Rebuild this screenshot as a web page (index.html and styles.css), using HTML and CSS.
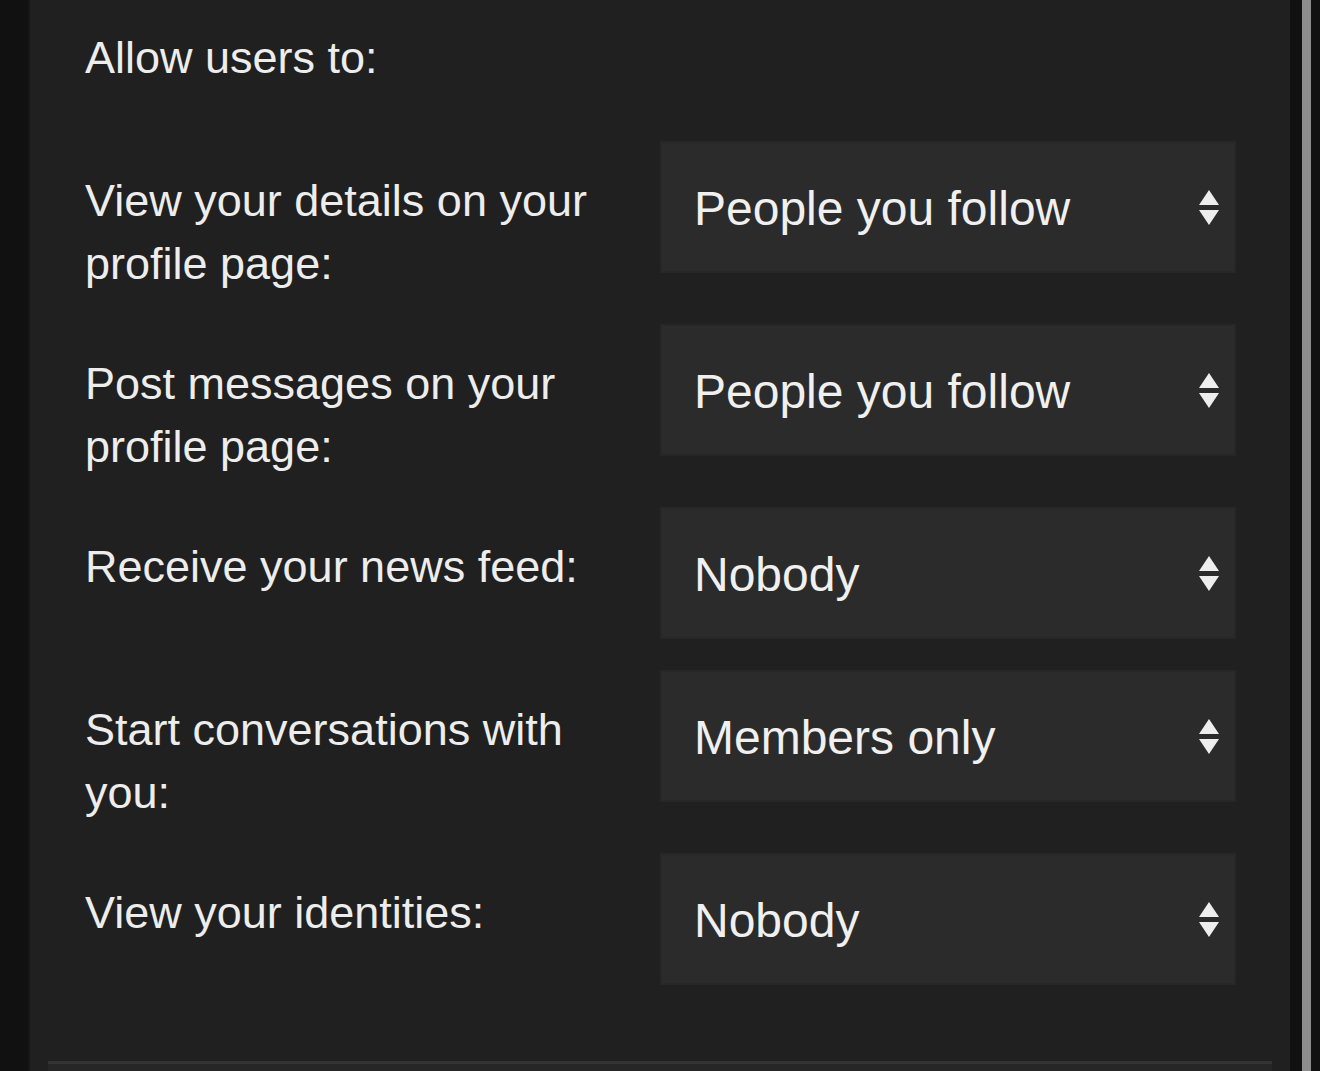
FILE: index.html
```html
<!DOCTYPE html>
<html>
<head>
<meta charset="utf-8">
<link rel="stylesheet" href="styles.css">
</head>
<body>
<div class="page">
  <div class="gutter-left"></div>
  <div class="panel">
    <div class="content">
      <div class="heading">Allow users to:</div>
      <div class="rows">
        <div class="row">
          <div class="label">View your details on your profile page:</div>
          <div class="select"><span class="value">People you follow</span>
            <svg class="arrows" width="20" height="35" viewBox="0 0 20 35"><polygon points="10,0 20,15 0,15" fill="#eeeeee"/><polygon points="0,20 20,20 10,35" fill="#eeeeee"/></svg></div>
        </div>
        <div class="row">
          <div class="label">Post messages on your profile page:</div>
          <div class="select"><span class="value">People you follow</span>
            <svg class="arrows" width="20" height="35" viewBox="0 0 20 35"><polygon points="10,0 20,15 0,15" fill="#eeeeee"/><polygon points="0,20 20,20 10,35" fill="#eeeeee"/></svg></div>
        </div>
        <div class="row">
          <div class="label">Receive your news feed:</div>
          <div class="select"><span class="value">Nobody</span>
            <svg class="arrows" width="20" height="35" viewBox="0 0 20 35"><polygon points="10,0 20,15 0,15" fill="#eeeeee"/><polygon points="0,20 20,20 10,35" fill="#eeeeee"/></svg></div>
        </div>
        <div class="row">
          <div class="label">Start conversations with you:</div>
          <div class="select"><span class="value">Members only</span>
            <svg class="arrows" width="20" height="35" viewBox="0 0 20 35"><polygon points="10,0 20,15 0,15" fill="#eeeeee"/><polygon points="0,20 20,20 10,35" fill="#eeeeee"/></svg></div>
        </div>
        <div class="row">
          <div class="label">View your identities:</div>
          <div class="select"><span class="value">Nobody</span>
            <svg class="arrows" width="20" height="35" viewBox="0 0 20 35"><polygon points="10,0 20,15 0,15" fill="#eeeeee"/><polygon points="0,20 20,20 10,35" fill="#eeeeee"/></svg></div>
        </div>
      </div>
    </div>
    <div class="divider"></div>
  </div>
  <div class="gutter-right"></div>
  <div class="scrollbar"></div>
  <div class="edge-right"></div>
</div>
</body>
</html>
```

FILE: styles.css
```css
html, body {
  margin: 0;
  padding: 0;
  background: #111111;
  overflow: hidden;
}
.page {
  display: flex;
  width: 1320px;
  height: 1071px;
  font-family: "Liberation Sans", Arial, sans-serif;
}
.gutter-left {
  flex: 0 0 28px;
  background: #111111;
  border-right: 2px solid #171717;
}
.panel {
  flex: 0 0 1260px;
  background: #202020;
  display: flex;
  flex-direction: column;
}
.content {
  padding: 26px 54px 0 55px;
  flex: 1;
}
.heading {
  font-size: 45px;
  line-height: 63px;
  color: #ededed;
  margin-bottom: 52px;
}
.rows {
  display: flex;
  flex-direction: column;
  gap: 31px;
}
.row {
  display: flex;
  align-items: flex-start;
}
.label {
  flex: 0 0 520px;
  margin-right: 55px;
  padding-top: 28px;
  margin-bottom: -2px;
  font-size: 45px;
  line-height: 63px;
  color: #ededed;
}
.select {
  flex: 0 0 auto;
  box-sizing: border-box;
  width: 576px;
  height: 132px;
  background: #2b2b2b;
  border: 2px solid #272727;
  display: flex;
  align-items: center;
  justify-content: space-between;
  padding: 2px 15px 0 32px;
}
.value {
  font-size: 48px;
  color: #f0f0f0;
}
.arrows {
  display: block;
  margin-top: -2px;
}
.divider {
  margin: 0 18px;
  height: 7px;
  border-top: 3px solid #333333;
  background: #262626;
}
.gutter-right {
  flex: 0 0 12px;
  background: #111111;
}
.scrollbar {
  flex: 0 0 9px;
  background: #8c8c8c;
}
.edge-right {
  flex: 0 0 9px;
  background: #111111;
}
```
